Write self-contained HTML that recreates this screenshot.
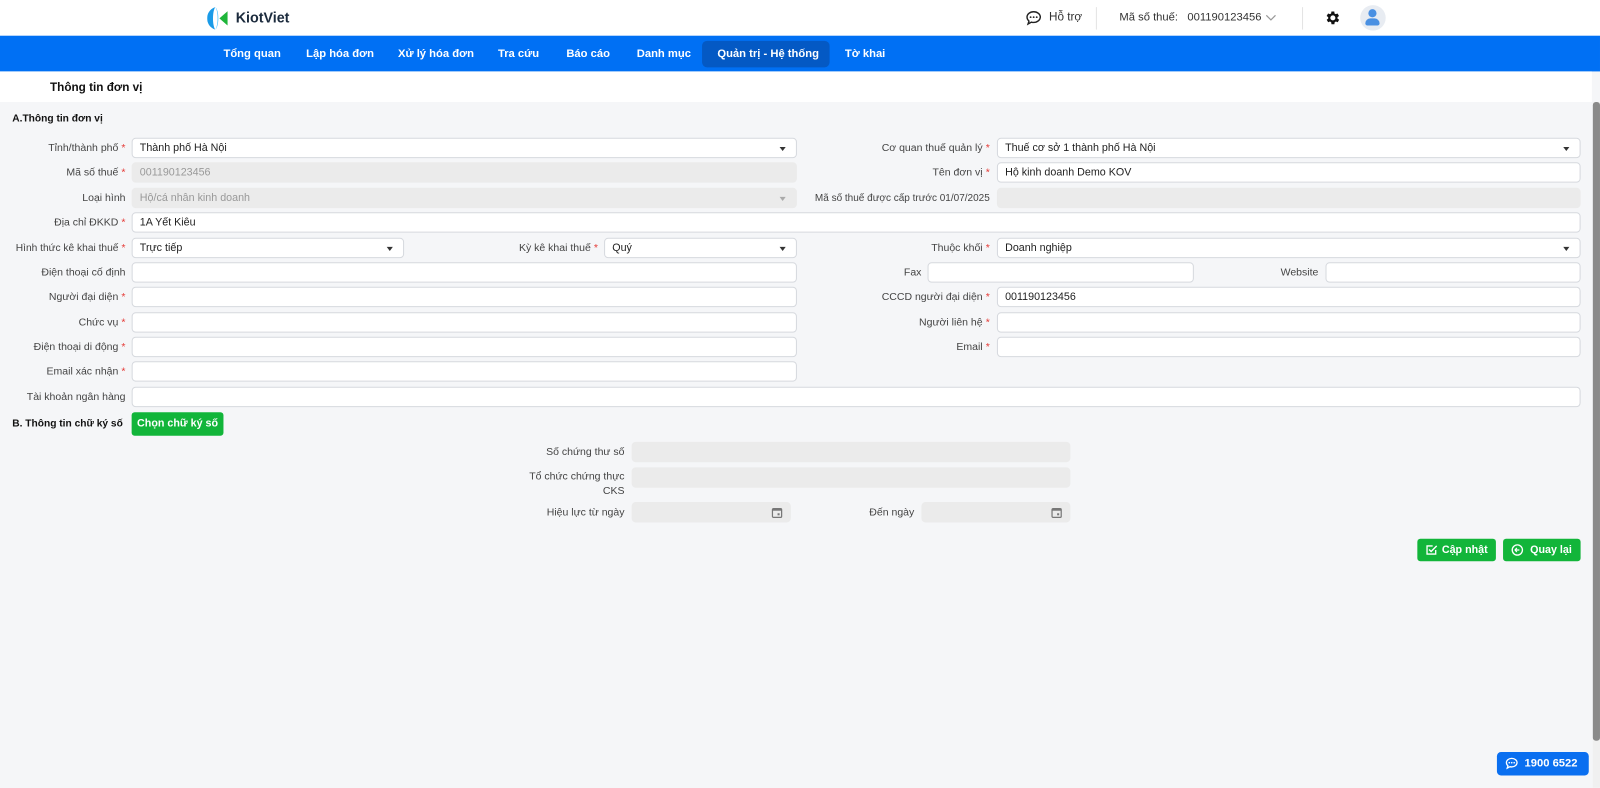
<!DOCTYPE html>
<html><head><meta charset="utf-8"><style>
*{box-sizing:border-box;margin:0;padding:0}
html,body{width:1600px;height:788px;overflow:hidden;background:#f5f6f8}
#w{position:absolute;left:0;top:0;width:1568px;height:772px;transform:scale(1.0204);transform-origin:0 0;font-family:"Liberation Sans",sans-serif;font-size:10.5px;color:#333}
.abs{position:absolute}
.top{left:0;top:0;width:1568px;height:35px;background:#fff}
.nav{left:0;top:35px;width:1568px;height:35px;background:#0070f4}
.nav span{position:absolute;top:1px;line-height:35px;color:#fff;font-weight:bold;font-size:11px}
.band{left:0;top:70px;width:1560px;height:30px;background:#fff}
.lbl{position:absolute;text-align:right;color:#444;font-size:10.3px;line-height:20px;white-space:nowrap;margin-top:1px}
.lbl i{color:#e53935;font-style:normal;margin-left:3px}
.in{position:absolute;height:20px;background:#fff;border:1px solid #d6d9de;border-radius:4px;line-height:18px;padding-left:7px;font-size:10.5px;color:#222}
.dis{background:#ebebeb;border-color:#ebebeb;color:#999}
.caret{position:absolute;right:10px;top:8px;width:0;height:0;border-left:3px solid transparent;border-right:3px solid transparent;border-top:4px solid #333}
.dis .caret{border-top-color:#aaa}
.btn{position:absolute;background:#12b53a;color:#fff;font-weight:bold;border-radius:3px;font-size:10.5px;text-align:center}
</style></head><body><div id="w">
<div class="abs top"></div>
<svg class="abs" style="left:203px;top:6px" width="22" height="24" viewBox="0 0 22 24"><path d="M8 1C2 3 0 8 0 12s2 9 8 11C5 19 5 5 8 1z" fill="#1a9be8"/><path d="M8 1c3 4 3 18 0 22C12 20 12 4 8 1z" fill="#4cc3ff"/><path d="M20 5L12 12l8 7z" fill="#1eb53a"/></svg>
<div class="abs" style="left:231px;top:9px;font-size:14px;font-weight:bold;color:#1b2a3c">KiotViet</div>
<svg class="abs" style="left:1005px;top:10px" width="16" height="15" viewBox="0 0 16 15"><path d="M8 1.5c3.6 0 6.5 2.3 6.5 5.2S11.6 12 8 12c-.8 0-1.5-.1-2.2-.3L2.5 13.5l.9-2.8C2.2 9.6 1.5 8.2 1.5 6.7 1.5 3.8 4.4 1.5 8 1.5z" fill="none" stroke="#222" stroke-width="1.4"/><circle cx="5" cy="6.8" r=".9" fill="#222"/><circle cx="8" cy="6.8" r=".9" fill="#222"/><circle cx="11" cy="6.8" r=".9" fill="#222"/></svg>
<div class="abs" style="left:1028px;top:11px;font-size:11.5px;color:#333">Hỗ trợ</div>
<div class="abs" style="left:1074px;top:7px;width:1px;height:22px;background:#e4e4e4"></div>
<div class="abs" style="left:1097px;top:11px;font-size:11px;color:#333">Mã số thuế:&nbsp;&nbsp; 001190123456</div>
<svg class="abs" style="left:1240px;top:14px" width="11" height="7" viewBox="0 0 11 7"><path d="M1 1l4.5 4.5L10 1" fill="none" stroke="#999" stroke-width="1.2"/></svg>
<div class="abs" style="left:1276px;top:7px;width:1px;height:22px;background:#e4e4e4"></div>
<svg class="abs" style="left:1297px;top:9px" width="17" height="17" viewBox="0 0 24 24"><path fill="#111" d="M19.4 13a7.5 7.5 0 000-2l2.1-1.6-2-3.5-2.5 1a7.6 7.6 0 00-1.7-1L15 3.2h-4l-.4 2.7a7.6 7.6 0 00-1.7 1l-2.5-1-2 3.5L6.6 11a7.5 7.5 0 000 2l-2.1 1.6 2 3.5 2.5-1c.5.4 1.1.7 1.7 1l.4 2.7h4l.4-2.7c.6-.3 1.2-.6 1.7-1l2.5 1 2-3.5zM13 15.5A3.5 3.5 0 1113 8.5a3.5 3.5 0 010 7z"/></svg>
<div class="abs" style="left:1333px;top:5px;width:25px;height:25px;border-radius:50%;background:#e8ecf2"></div>
<div class="abs" style="left:1341px;top:9px;width:8px;height:8px;border-radius:50%;background:#4a90e2"></div>
<div class="abs" style="left:1338px;top:18px;width:14px;height:7px;border-radius:7px 7px 3px 3px;background:#4a90e2"></div>

<div class="abs nav">
<div class="abs" style="left:688px;top:5px;width:125px;height:26px;background:#0459c4;border-radius:5px"></div>
<span style="left:219px">Tổng quan</span><span style="left:300px">Lập hóa đơn</span><span style="left:390px">Xử lý hóa đơn</span><span style="left:488px">Tra cứu</span><span style="left:555px">Báo cáo</span><span style="left:624px">Danh mục</span><span style="left:703px">Quản trị - Hệ thống</span><span style="left:828px">Tờ khai</span>
</div>
<div class="abs band"></div>
<div class="abs" style="left:49px;top:80px;font-weight:bold;font-size:11.5px;color:#111">Thông tin đơn vị</div>
<div class="abs" style="left:1561px;top:100px;width:7px;height:672px;background:#f0f0f0"></div>
<div class="abs" style="left:1561px;top:100px;width:7px;height:626px;background:#8a8a8a;border-radius:3px"></div>

<div class="abs" style="left:12px;top:111px;font-weight:bold;font-size:10px;color:#111">A.Thông tin đơn vị</div>

<div class="lbl" style="right:1445px;top:135px">Tỉnh/thành phố<i>*</i></div>
<div class="in" style="left:129px;top:135px;width:652px">Thành phố Hà Nội<span class="caret"></span></div>
<div class="lbl" style="right:598px;top:135px">Cơ quan thuế quản lý<i>*</i></div>
<div class="in" style="left:977px;top:135px;width:572px">Thuế cơ sở 1 thành phố Hà Nội<span class="caret"></span></div>

<div class="lbl" style="right:1445px;top:159px">Mã số thuế<i>*</i></div>
<div class="in dis" style="left:129px;top:159px;width:652px">001190123456</div>
<div class="lbl" style="right:598px;top:159px">Tên đơn vị<i>*</i></div>
<div class="in" style="left:977px;top:159px;width:572px">Hộ kinh doanh Demo KOV</div>

<div class="lbl" style="right:1445px;top:184px">Loại hình</div>
<div class="in dis" style="left:129px;top:184px;width:652px">Hộ/cá nhân kinh doanh<span class="caret"></span></div>
<div class="lbl" style="right:598px;top:184px;font-size:9.8px">Mã số thuế được cấp trước 01/07/2025</div>
<div class="in dis" style="left:977px;top:184px;width:572px"></div>

<div class="lbl" style="right:1445px;top:208px">Địa chỉ ĐKKD<i>*</i></div>
<div class="in" style="left:129px;top:208px;width:1420px">1A Yết Kiêu</div>

<div class="lbl" style="right:1445px;top:233px;font-size:10px">Hình thức kê khai thuế<i>*</i></div>
<div class="in" style="left:129px;top:233px;width:267px">Trực tiếp<span class="caret"></span></div>
<div class="lbl" style="right:982px;top:233px">Kỳ kê khai thuế<i>*</i></div>
<div class="in" style="left:592px;top:233px;width:189px">Quý<span class="caret"></span></div>
<div class="lbl" style="right:598px;top:233px">Thuộc khối<i>*</i></div>
<div class="in" style="left:977px;top:233px;width:572px">Doanh nghiệp<span class="caret"></span></div>

<div class="lbl" style="right:1445px;top:257px">Điện thoại cố định</div>
<div class="in" style="left:129px;top:257px;width:652px"></div>
<div class="lbl" style="right:665px;top:257px">Fax</div>
<div class="in" style="left:909px;top:257px;width:261px"></div>
<div class="lbl" style="right:276px;top:257px">Website</div>
<div class="in" style="left:1299px;top:257px;width:250px"></div>

<div class="lbl" style="right:1445px;top:281px">Người đại diện<i>*</i></div>
<div class="in" style="left:129px;top:281px;width:652px"></div>
<div class="lbl" style="right:598px;top:281px">CCCD người đại diện<i>*</i></div>
<div class="in" style="left:977px;top:281px;width:572px">001190123456</div>

<div class="lbl" style="right:1445px;top:306px">Chức vụ<i>*</i></div>
<div class="in" style="left:129px;top:306px;width:652px"></div>
<div class="lbl" style="right:598px;top:306px">Người liên hệ<i>*</i></div>
<div class="in" style="left:977px;top:306px;width:572px"></div>

<div class="lbl" style="right:1445px;top:330px">Điện thoại di động<i>*</i></div>
<div class="in" style="left:129px;top:330px;width:652px"></div>
<div class="lbl" style="right:598px;top:330px">Email<i>*</i></div>
<div class="in" style="left:977px;top:330px;width:572px"></div>

<div class="lbl" style="right:1445px;top:354px">Email xác nhận<i>*</i></div>
<div class="in" style="left:129px;top:354px;width:652px"></div>

<div class="lbl" style="right:1445px;top:379px">Tài khoản ngân hàng</div>
<div class="in" style="left:129px;top:379px;width:1420px"></div>

<div class="abs" style="left:12px;top:410px;font-weight:bold;font-size:10px;color:#111">B. Thông tin chữ ký số</div>
<div class="btn" style="left:129px;top:404px;width:90px;height:23px;line-height:23px">Chọn chữ ký số</div>

<div class="lbl" style="right:956px;top:433px">Số chứng thư số</div>
<div class="in dis" style="left:619px;top:433px;width:430px"></div>
<div class="lbl" style="right:956px;top:460px;line-height:14px">Tổ chức chứng thực<br>CKS</div>
<div class="in dis" style="left:619px;top:458px;width:430px"></div>
<div class="lbl" style="right:956px;top:492px">Hiệu lực từ ngày</div>
<div class="in dis" style="left:619px;top:492px;width:156px"></div>
<div class="lbl" style="right:672px;top:492px">Đến ngày</div>
<div class="in dis" style="left:903px;top:492px;width:146px"></div>
<svg class="abs" style="left:756px;top:497px" width="11" height="11" viewBox="0 0 11 11"><rect x="1" y="1.5" width="9" height="8.5" rx="1" fill="none" stroke="#777" stroke-width="1.2"/><rect x="1" y="1.5" width="9" height="2" fill="#777"/><rect x="6" y="6" width="2" height="2" fill="#777"/></svg>
<svg class="abs" style="left:1030px;top:497px" width="11" height="11" viewBox="0 0 11 11"><rect x="1" y="1.5" width="9" height="8.5" rx="1" fill="none" stroke="#777" stroke-width="1.2"/><rect x="1" y="1.5" width="9" height="2" fill="#777"/><rect x="6" y="6" width="2" height="2" fill="#777"/></svg>

<div class="btn" style="left:1389px;top:528px;width:77px;height:22px;line-height:22px;padding-left:16px">Cập nhật</div>
<svg class="abs" style="left:1397px;top:533px" width="12" height="12" viewBox="0 0 12 12"><path d="M10 6v4H1.5V2H7" fill="none" stroke="#fff" stroke-width="1.3"/><path d="M3.5 5.5l2 2L11 2" fill="none" stroke="#fff" stroke-width="1.4"/></svg>
<div class="btn" style="left:1473px;top:528px;width:76px;height:22px;line-height:22px;padding-left:18px">Quay lại</div>
<svg class="abs" style="left:1481px;top:533px" width="12" height="12" viewBox="0 0 12 12"><circle cx="6" cy="6" r="5" fill="none" stroke="#fff" stroke-width="1.3"/><path d="M4 6h4M5.5 4L3.8 6l1.7 2" fill="none" stroke="#fff" stroke-width="1.2"/></svg>

<div class="abs" style="left:1467px;top:737px;width:90px;height:23px;background:#0a6ff0;border-radius:4px;color:#fff;font-weight:bold;font-size:11px;line-height:23px;padding-left:27px">1900 6522</div>
<svg class="abs" style="left:1475px;top:742px" width="13" height="12" viewBox="0 0 16 15"><path d="M8 1.5c3.6 0 6.5 2.3 6.5 5.2S11.6 12 8 12c-.8 0-1.5-.1-2.2-.3L2.5 13.5l.9-2.8C2.2 9.6 1.5 8.2 1.5 6.7 1.5 3.8 4.4 1.5 8 1.5z" fill="none" stroke="#fff" stroke-width="1.6"/><circle cx="5" cy="6.8" r="1" fill="#fff"/><circle cx="8" cy="6.8" r="1" fill="#fff"/><circle cx="11" cy="6.8" r="1" fill="#fff"/></svg>
</div></body></html>
